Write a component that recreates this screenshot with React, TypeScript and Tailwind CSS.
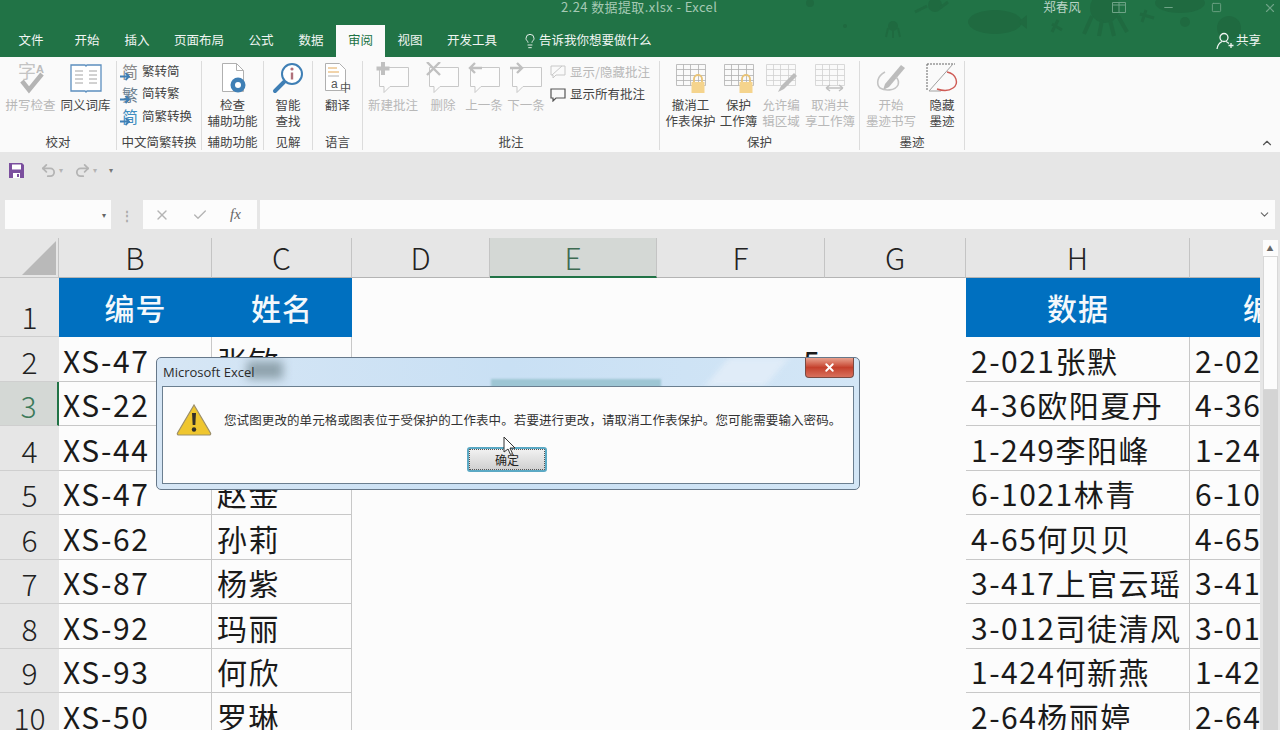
import { Check, ChevronUp, Lightbulb, X, Undo2, Redo2, Minus, Square } from "lucide-react";
import type { ReactNode } from "react";

const cjk = "font-['Noto_Sans_CJK_SC','Noto_Sans',sans-serif]";

const tabs = [
  { name: "文件", cls: "w-[62px]" },
  { name: "开始", cls: "w-[50px]" },
  { name: "插入", cls: "w-[50px]" },
  { name: "页面布局", cls: "w-[74px]" },
  { name: "公式", cls: "w-[50px]" },
  { name: "数据", cls: "w-[50px]" },
  { name: "审阅", cls: "w-[49px] bg-[#fafafa] text-[#217346]" },
  { name: "视图", cls: "w-[50px]" },
  { name: "开发工具", cls: "w-[74px]" },
];

const rows: { n: number; b: string; c: string; h: string; i: string; active?: boolean }[] = [
  { n: 2, b: "XS-47", c: "张敏", h: "2-021张默", i: "2-02" },
  { n: 3, b: "XS-22", c: "", h: "4-36欧阳夏丹", i: "4-36", active: true },
  { n: 4, b: "XS-44", c: "", h: "1-249李阳峰", i: "1-24" },
  { n: 5, b: "XS-47", c: "赵金", h: "6-1021林青", i: "6-10" },
  { n: 6, b: "XS-62", c: "孙莉", h: "4-65何贝贝", i: "4-65" },
  { n: 7, b: "XS-87", c: "杨紫", h: "3-417上官云瑶", i: "3-41" },
  { n: 8, b: "XS-92", c: "玛丽", h: "3-012司徒清风", i: "3-01" },
  { n: 9, b: "XS-93", c: "何欣", h: "1-424何新燕", i: "1-42" },
  { n: 10, b: "XS-50", c: "罗琳", h: "2-64杨丽婷", i: "2-64" },
];

const Comment = ({ mark }: { mark?: ReactNode }) => (
  <svg width="34" height="32" viewBox="0 0 34 32" fill="none">
    <path d="M3.5 5.500h29v19H14l-6 6v-6H3.500z" stroke="#c8c8c8" strokeWidth="1" fill="#fcfcfc" />
    {mark}
  </svg>
);

const Sheet = ({ lock, arrows, pen }: { lock?: boolean; arrows?: boolean; pen?: boolean }) => (
  <svg width="34" height="32" viewBox="0 0 34 32" fill="none">
    <path d="M2.500 2.500h29v21h-29zM2.500 7.500h29M2.500 13.500h29M2.500 18.500h29M9.500 2.500v21M16.500 2.500v21M24.500 2.500v21" stroke={lock ? "#b0b0b0" : "#d0d0d0"} strokeWidth="0.8" />
    {lock && (
      <g>
        <path d="M20 20v-3a4 4 0 0 1 8 0v3" stroke="#e8c377" strokeWidth="1.8" />
        <rect x="17.500" y="20" width="13" height="11" fill="#f5d48d" />
      </g>
    )}
    {arrows && <path d="M13 26h17M13 26l4-3M13 26l4 3M30 26l-4-3M30 26l-4 3" stroke="#c0c0c0" strokeWidth="1.500" />}
    {pen && <path d="M14 30l3-6 13-13 3 3-13 13z" fill="#bcbcbc" />}
  </svg>
);

const ConvertIcon = ({ glyph, cls }: { glyph: string; cls: string }) => (
  <span className={`relative block h-[20px] w-[17px] text-center text-[16px] leading-[20px] ${cls}`}>
    {glyph}
    <svg className="absolute bottom-0 left-[-2px]" width="11" height="9" viewBox="0 0 11 9" fill="none">
      <path d="M0 4.500h9M5.500 1L9 4.500 5.500 8" stroke="#3f7fb5" strokeWidth="1.800" />
    </svg>
  </span>
);

const RibbonBtn = ({ icon, label, off, cls }: { icon: ReactNode; label: ReactNode; off?: boolean; cls: string }) => (
  <div className={`flex flex-col items-center ${cls} ${off ? "text-[#b8b8b8]" : "text-[#444]"}`}>
    <div className="flex h-[34px] items-center justify-center">{icon}</div>
    <div className="mt-[2px] text-center leading-[16px] whitespace-nowrap">{label}</div>
  </div>
);

const Group = ({ label, cls, children }: { label: string; cls: string; children: ReactNode }) => (
  <div className={`flex h-[89px] flex-col border-r border-[#dcdcdc] ${cls}`}>
    <div className="flex flex-1 justify-center">{children}</div>
    <div className="h-[16px] text-center leading-[16px] text-[#444]">{label}</div>
  </div>
);

const SmallRow = ({ icon, label, off }: { icon: ReactNode; label: string; off?: boolean }) => (
  <div className={`flex h-[22.5px] items-center gap-[3px] whitespace-nowrap ${off ? "text-[#b8b8b8]" : "text-[#444]"}`}>
    <span className="flex w-[18px] justify-center">{icon}</span>
    {label}
  </div>
);

const Ribbon = () => (
  <div className="flex h-[95px] bg-[#fafafa] pt-[4px] text-[12.5px]">
    <Group label="校对" cls="w-[117px]">
      <RibbonBtn
        off
        cls="w-[55px]"
        label="拼写检查"
        icon={
          <svg width="34" height="34" viewBox="0 0 34 34" fill="none">
            <text x="4" y="17" fontSize="18" fill="#c4c4c4" fontFamily="Noto Sans CJK SC">字</text>
            <text x="22" y="12" fontSize="11" fontWeight="700" fill="#bcbcbc" fontFamily="Liberation Sans">A</text>
            <path d="M8 20l7 9L28 13" stroke="#b4b4b4" strokeWidth="4.500" />
          </svg>
        }
      />
      <RibbonBtn
        cls="w-[55px]"
        label="同义词库"
        icon={
          <svg width="32" height="30" viewBox="0 0 32 30" fill="none">
            <path d="M1 2h14l1 1 1-1h14v26H17l-1 1-1-1H1z" fill="#fff" stroke="#5c8fbf" strokeWidth="1.300" />
            <path d="M5 8h8M5 12h8M5 16h8M5 20h8M19 8h8M19 12h8M19 16h8M19 20h8" stroke="#a4a4a4" />
          </svg>
        }
      />
    </Group>
    <Group label="中文简繁转换" cls="w-[85px]">
      <div className="-mt-[1px] flex w-full flex-col pl-[4px]">
        <SmallRow label="繁转简" icon={<ConvertIcon glyph="简" cls="text-[#8a8a8a]" />} />
        <SmallRow label="简转繁" icon={<ConvertIcon glyph="繁" cls="text-[#6a7f90]" />} />
        <SmallRow label="简繁转换" icon={<ConvertIcon glyph="简" cls="text-[#3f8dc0]" />} />
      </div>
    </Group>
    <Group label="辅助功能" cls="w-[62px]">
      <RibbonBtn
        cls="w-[60px]"
        label={<>检查<br />辅助功能</>}
        icon={
          <svg width="30" height="32" viewBox="0 0 30 32" fill="none">
            <path d="M4.500 1.500h14l7 7v21h-21z" fill="#fff" stroke="#b0b0b0" />
            <path d="M18.500 1.500v7h7" stroke="#b0b0b0" />
            <circle cx="20" cy="23" r="7.500" fill="#3f7fb5" />
            <circle cx="20" cy="23" r="3" fill="#fff" />
          </svg>
        }
      />
    </Group>
    <Group label="见解" cls="w-[49px]">
      <RibbonBtn
        cls="w-[48px]"
        label={<>智能<br />查找</>}
        icon={
          <svg width="32" height="32" viewBox="0 0 32 32" fill="none">
            <circle cx="20" cy="12" r="10" stroke="#3f7fb5" strokeWidth="2" fill="#fff" />
            <path d="M12 20L3 29" stroke="#3f7fb5" strokeWidth="4" strokeLinecap="round" />
            <circle cx="20" cy="7" r="1.600" fill="#b0707a" />
            <path d="M20 10.500v7" stroke="#b0707a" strokeWidth="2.400" />
          </svg>
        }
      />
    </Group>
    <Group label="语言" cls="w-[50px]">
      <RibbonBtn
        cls="w-[48px]"
        label="翻译"
        icon={
          <svg width="30" height="32" viewBox="0 0 30 32" fill="none">
            <path d="M2.500 1.500h14l6 6v21h-20z" fill="#fff" stroke="#b0b0b0" />
            <path d="M5 6h9M5 10h11" stroke="#e3a857" />
            <path d="M5 14h11" stroke="#b0b0b0" />
            <text x="8" y="26" fontSize="12" fill="#555" fontFamily="Liberation Sans">a</text>
            <text x="17" y="30" fontSize="11" fill="#555" fontFamily="Noto Sans CJK SC">中</text>
          </svg>
        }
      />
    </Group>
    <Group label="批注" cls="w-[297px]">
      <div className="flex w-full pl-[5px]">
        <RibbonBtn off cls="w-[50px]" label="新建批注" icon={<Comment mark={<path d="M7 0v13M0.500 6.500h13" stroke="#c0c0c0" strokeWidth="4" />} />} />
        <RibbonBtn off cls="ml-[4px] w-[42px]" label="删除" icon={<Comment mark={<path d="M1 0l13 13M14 0L1 13" stroke="#c0c0c0" strokeWidth="2.400" />} />} />
        <RibbonBtn off cls="w-[40px]" label="上一条" icon={<Comment mark={<path d="M15 6H3M8 1L3 6l5 5" stroke="#c0c0c0" strokeWidth="2.400" />} />} />
        <RibbonBtn off cls="ml-[1px] w-[42px]" label="下一条" icon={<Comment mark={<path d="M1 6h12M8 1l5 5-5 5" stroke="#c0c0c0" strokeWidth="2.400" />} />} />
        <div className="ml-[2px] flex flex-col">
          <SmallRow
            off
            label="显示/隐藏批注"
            icon={
              <svg width="16" height="14" viewBox="0 0 16 14" fill="none">
                <path d="M1 1h14v9H6l-3 3v-3H1zM2 10l10-9" stroke="#c8c8c8" />
              </svg>
            }
          />
          <SmallRow
            label="显示所有批注"
            icon={
              <svg width="16" height="14" viewBox="0 0 16 14" fill="none">
                <path d="M1 1h14v9H6l-3 3v-3H1z" stroke="#555" strokeWidth="1.200" />
              </svg>
            }
          />
        </div>
      </div>
    </Group>
    <Group label="保护" cls="w-[200px]">
      <RibbonBtn cls="ml-[5px] w-[51px]" label={<>撤消工<br />作表保护</>} icon={<Sheet lock />} />
      <RibbonBtn cls="w-[45px]" label={<>保护<br />工作簿</>} icon={<Sheet lock />} />
      <RibbonBtn off cls="w-[40px]" label={<>允许编<br />辑区域</>} icon={<Sheet pen />} />
      <RibbonBtn off cls="w-[58px]" label={<>取消共<br />享工作簿</>} icon={<Sheet arrows />} />
    </Group>
    <Group label="墨迹" cls="w-[105px]">
      <RibbonBtn
        off
        cls="w-[60px]"
        label={<>开始<br />墨迹书写</>}
        icon={
          <svg width="32" height="32" viewBox="0 0 32 32" fill="none">
            <path d="M10 22L26 3l4 3-16 19-6 3z" fill="#bcbcbc" />
            <path d="M10 10C2 14 1 22 5 26c5 3 15 3 18-3 1-3 0-6-2-8" stroke="#c4c4c4" strokeWidth="1.600" />
          </svg>
        }
      />
      <RibbonBtn
        cls="ml-[2px] mr-[2px] w-[38px]"
        label={<>隐藏<br />墨迹</>}
        icon={
          <svg width="34" height="32" viewBox="0 0 34 32" fill="none">
            <path d="M2 2h28M2 2v27" stroke="#666" strokeDasharray="2 1" />
            <path d="M28 2L4 29h12" stroke="#a0a0a0" />
            <path d="M22 10c10 2 12 12 6 16-4 3-10 3-16 1" stroke="#cf5b55" strokeWidth="1.400" />
          </svg>
        }
      />
    </Group>
    <div className="flex flex-1 items-end justify-end pr-[6px] pb-[2px]">
      <ChevronUp size={14} className="text-[#555]" />
    </div>
  </div>
);

const ColHead = ({ name, active, border = true }: { name: string; active?: boolean; border?: boolean }) => (
  <div
    className={`flex items-center justify-center border-b text-[30px] font-light ${
      active ? "border-b-2 border-b-[#217346] bg-[#d4d8d5] text-[#3d6b52]" : "border-b-[#b4b4b4] bg-[#e6e6e6] text-[#222]"
    } ${border ? "border-r border-r-[#c4c4c4]" : ""}`}
  >
    {name}
  </div>
);

const RowHead = ({ n, active }: { n: number; active?: boolean }) => (
  <div
    className={`flex items-end justify-center border-b border-[#cfcfcf] pb-[1px] text-[30px] leading-[38px] font-light ${
      active ? "border-r-2 border-r-[#217346] bg-[#d4d8d5] text-[#3d7a5a]" : "bg-[#e6e6e6] text-[#222]"
    }`}
  >
    {n}
  </div>
);

const Head = ({ text, clip }: { text: string; clip?: boolean }) => (
  <div className={`flex items-center overflow-hidden bg-[#0070c0] text-[30px] font-medium tracking-[1px] whitespace-nowrap text-[#f4f8fb] ${clip ? "pl-[53px]" : "justify-center"}`}>
    {text}
  </div>
);

const Grid = () => (
  <div className={`grid flex-1 grid-cols-[59px_153px_140px_138px_167px_168px_141px_224px_70px] grid-rows-[40px_59px_repeat(9,44.5px)] overflow-hidden bg-[#fcfcfc] ${cjk}`}>
    <div className="flex items-end justify-end border-r border-b border-[#c4c4c4] bg-[#e6e6e6] p-[2px]">
      <svg width="34" height="34" viewBox="0 0 34 34" className="shrink-0">
        <path d="M34 0v34H0z" fill="#b9b9b9" />
      </svg>
    </div>
    <ColHead name="B" />
    <ColHead name="C" />
    <ColHead name="D" />
    <ColHead name="E" active />
    <ColHead name="F" />
    <ColHead name="G" />
    <ColHead name="H" />
    <ColHead name="" border={false} />

    <RowHead n={1} />
    <Head text="编号" />
    <Head text="姓名" />
    <div className="col-span-4" />
    <Head text="数据" />
    <Head text="编号" clip />

    {rows.map((r) => (
      <div key={r.n} className="contents">
        <RowHead n={r.n} active={r.active} />
        <div className="flex items-end overflow-hidden border-r border-b border-[#c8c8c8] pb-[2px] pl-[4px] text-[30px] leading-[38px] tracking-[1.5px] text-[#1a1a1a]">{r.b}</div>
        <div className="flex items-end overflow-hidden border-r border-b border-[#c8c8c8] pb-[2px] pl-[5px] text-[30px] leading-[38px] tracking-[1.5px] text-[#1a1a1a]">{r.c}</div>
        <div />
        <div />
        <div className="flex items-end justify-end pr-[5px] pb-[2px] text-[30px] leading-[38px] text-[#1a1a1a]">{r.n === 2 ? "5" : ""}</div>
        <div />
        <div className="flex items-end overflow-hidden border-r border-b border-[#c8c8c8] pb-[2px] pl-[5px] text-[30px] leading-[38px] tracking-[1.5px] whitespace-nowrap text-[#1a1a1a]">{r.h}</div>
        <div className="flex items-end overflow-hidden border-b border-[#c8c8c8] pb-[2px] pl-[5px] text-[30px] leading-[38px] tracking-[1.5px] whitespace-nowrap text-[#1a1a1a]">{r.i}</div>
      </div>
    ))}
  </div>
);

const Dialog = () => (
  <div className="absolute top-[357px] left-[156px] flex h-[133px] w-[704px] flex-col overflow-hidden rounded-[5px] border border-[#66788a] bg-gradient-to-r from-[#d6e6f5] via-[#c9e0f4] to-[#d3e6f6] px-[5px] pb-[5px]">
    {/* blurred aero glass */}
    <div className="absolute top-[3px] left-[90px] h-[18px] w-[36px] bg-[#8fa3ad] blur-[5px]" />
    <div className="absolute top-[21px] left-[334px] h-[9px] w-[170px] bg-[#9ec6d4] blur-[1px]" />
    <div className="absolute top-[0px] left-[560px] h-[28px] w-[60px] -skew-x-[40deg] bg-[#e0ecf8] blur-[3px]" />
    <div className="relative flex h-[28px] items-start justify-between">
      <span className="pt-[5px] pl-[1px] font-['Open_Sans',sans-serif] text-[13px] text-[#2a2a2a]">Microsoft Excel</span>
      <div className="flex h-[20px] w-[49px] items-center justify-center rounded-b-[4px] border border-t-0 border-[#7a4a42] bg-gradient-to-b from-[#e8a08e] via-[#c4402c] to-[#d8705c]">
        <X size={13} strokeWidth={3.5} className="text-white" />
      </div>
    </div>
    <div className={`relative flex flex-1 flex-col border border-[#6b7f90] bg-[#fcfcfc] ${cjk}`}>
      <div className="flex items-center pt-[17px] pl-[13px]">
        <svg width="36" height="32" viewBox="0 0 36 32">
          <path d="M18 1L1.500 29c-.5 1 .2 2 1.300 2h30.400c1.100 0 1.800-1 1.300-2z" fill="#efc62f" stroke="#9c8f6a" strokeWidth="1.200" />
          <path d="M16 9h4l-.7 12h-2.600z" fill="#33302a" />
          <circle cx="18" cy="25.500" r="2.200" fill="#33302a" />
        </svg>
        <span className="ml-[12px] text-[12.5px] tracking-[0.1px] whitespace-nowrap text-[#333]">您试图更改的单元格或图表位于受保护的工作表中。若要进行更改，请取消工作表保护。您可能需要输入密码。</span>
      </div>
      <div className="mt-[11px] flex justify-center pr-[2px]">
        <div className="flex h-[25px] w-[80px] items-center justify-center rounded-[3px] border-2 border-[#5ba9c4] bg-gradient-to-b from-[#f2f2f2] to-[#d0d0d0] text-[12px] text-[#222] outline-1 -outline-offset-3 outline-[#555] outline-dotted">
          确定
        </div>
      </div>
    </div>
  </div>
);

const App = () => (
  <div className={`relative flex h-[730px] w-[1280px] flex-col overflow-hidden bg-[#e6e6e6] ${cjk}`}>
    <div className="relative flex h-[57px] flex-col bg-[#217346] text-[12.5px] text-[#f0f5f2]">
      {/* doodle pattern behind the title bar */}
      <svg className="absolute top-0 left-[780px]" width="500" height="57" viewBox="0 0 500 57" fill="#1f6a40">
        <ellipse cx="215" cy="22" rx="27" ry="12" />
        <path d="M238 22l9-7v14z" />
        <circle cx="325" cy="8" r="15" />
        <path d="M312 16l-8 18M322 20l-3 16M330 20l4 16M338 16l9 16" stroke="#1f6a40" strokeWidth="4" />
        <ellipse cx="400" cy="3" rx="25" ry="10" />
        <circle cx="405" cy="22" r="5" />
        <circle cx="449" cy="28" r="12" />
        <circle cx="113" cy="26" r="5" />
        <path d="M108 28l-2 9M113 30v8M118 28l2 9" stroke="#1f6a40" strokeWidth="2" />
        <circle cx="65" cy="26" r="2" />
        <circle cx="30" cy="3" r="4" />
        <circle cx="155" cy="5" r="7" />
        <path d="M135 12l12-6M160 8l8-6M272 24l10 6M278 20l-6 12M360 14l14 4M366 10l-4 12" stroke="#1f6a40" strokeWidth="3" />
      </svg>
      <div className="relative flex h-[25px] items-start">
        <span className="ml-[561px] text-[13px] leading-[14px] tracking-[0.4px] whitespace-nowrap text-[#a5c9b4]">2.24 数据提取.xlsx - Excel</span>
        <span className="ml-[326px] leading-[13px] whitespace-nowrap text-[#b8d2c4]">郑春风</span>
        <div className="ml-[31px] flex items-start gap-[36px] pt-[2px] text-[#6ea386]">
          <svg width="14" height="11" viewBox="0 0 14 11" fill="none" stroke="currentColor"><path d="M.5.5h13v10H.5zM7 .5v10M.5 3h13" /></svg>
          <Minus size={13} className="-mt-[1px]" />
          <Square size={11} />
          <X size={14} className="-mt-[1px] ml-[5px]" />
        </div>
      </div>
      <div className="relative flex h-[32px] items-stretch">
        {tabs.map((t) => (
          <div key={t.name} className={`flex items-center justify-center pb-[1px] ${t.cls}`}>{t.name}</div>
        ))}
        <div className="ml-[13px] flex items-center gap-[1px] pb-[1px] whitespace-nowrap">
          <Lightbulb size={16} strokeWidth={1.4} />
          <span>告诉我你想要做什么</span>
        </div>
        <div className="ml-auto flex items-center gap-[2px] pr-[19px] pb-[1px]">
          <svg width="18" height="18" viewBox="0 0 18 18" fill="none" stroke="currentColor" strokeWidth="1.300">
            <circle cx="8" cy="5.500" r="4" />
            <path d="M1 17c.5-4 3-6.500 5-7.500M10 9.500c1 .4 2 1 2.800 2M12.500 13.500h5M15 11v5" />
          </svg>
          <span>共享</span>
        </div>
      </div>
    </div>

    <Ribbon />

    <div className="flex h-[48px] items-center pb-[12px] pl-[9px] text-[#b4b4b4]">
      <svg width="15" height="15" viewBox="0 0 15 15">
        <path d="M0 0h13l2 2v13H0z" fill="#7b4f9e" />
        <path d="M3 1.500h9v5H3z" fill="#fff" />
        <path d="M4 10h7v5H4z" fill="#fff" />
        <path d="M8 11h2v3H8z" fill="#7b4f9e" />
      </svg>
      <Undo2 size={17} className="ml-[16px]" strokeWidth={2.5} />
      <span className="ml-[2px] text-[8px]">▾</span>
      <Redo2 size={17} className="ml-[11px]" strokeWidth={2.5} />
      <span className="ml-[2px] text-[8px]">▾</span>
      <span className="ml-[12px] text-[8px] text-[#777]">▾</span>
    </div>

    <div className="flex h-[29px] items-stretch px-[5px] text-[#b4b4b4]">
      <div className="flex w-[106px] items-center justify-end bg-[#fcfcfc] pr-[5px] text-[8px] text-[#666]">▾</div>
      <div className="flex w-[32px] items-center justify-center text-[12px] font-bold text-[#aaa]">⋮</div>
      <div className="flex w-[114px] items-center gap-[22px] bg-[#fcfcfc] pl-[11px]">
        <X size={16} />
        <Check size={16} />
        <span className="font-['Liberation_Serif',serif] text-[15px] text-[#666] italic">fx</span>
      </div>
      <div className="ml-[3px] flex flex-1 items-center justify-end bg-[#fcfcfc] pr-[4px]">
        <ChevronUp size={13} className="rotate-180 text-[#666]" />
      </div>
    </div>

    <div className="flex min-h-0 flex-1 pt-[9px]">
      <div className="flex min-w-0 flex-1">
        <Grid />
      </div>
      <div className="flex w-[20px] flex-col items-center bg-[#e6e6e6] pt-[2px]">
        <div className="flex h-[16px] w-[15px] items-center justify-center bg-[#fcfcfc] text-[7px] text-[#666]">▲</div>
        <div className="flex w-[15px] flex-1 flex-col bg-[#d4d4d4]">
          <div className="h-[134px] border border-[#d8d8d8] bg-[#fcfcfc]" />
        </div>
      </div>
    </div>

    <Dialog />

    <svg className="absolute top-[436px] left-[503px]" width="13" height="20" viewBox="0 0 13 20">
      <path d="M1 1v15l4-3 2.500 5.500 2-1L7 12h5z" fill="#fff" stroke="#333" strokeWidth="1" />
    </svg>
  </div>
);

export default App;
